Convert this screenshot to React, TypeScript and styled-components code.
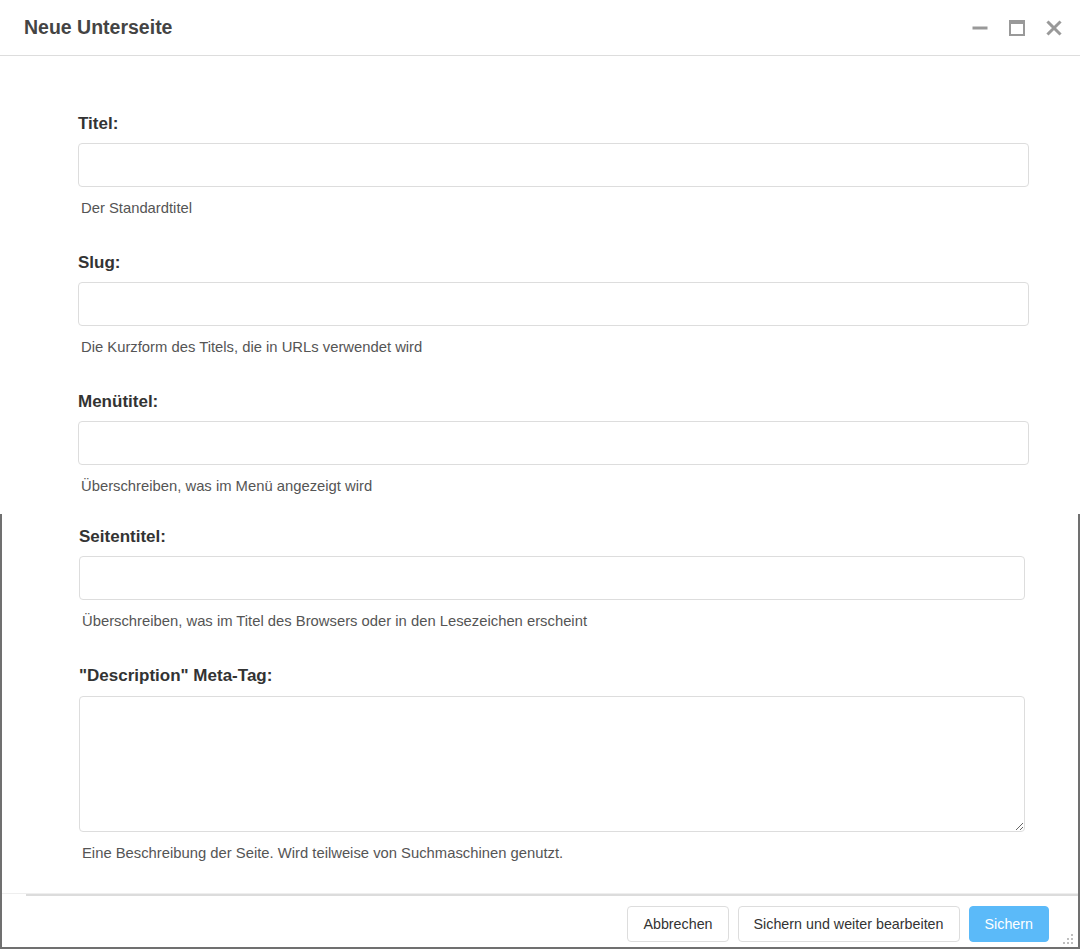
import styled, { createGlobalStyle } from "styled-components";

const GlobalStyle = createGlobalStyle`
  html, body {
    margin: 0;
    padding: 0;
    background: #fff;
  }
  body {
    font-family: "Liberation Sans", Arial, Helvetica, sans-serif;
    color: #333;
  }
`;

type FieldProps = {
  label: string;
  help: string;
  multiline?: boolean;
};

const Field = ({ label, help, multiline }: FieldProps) => (
  <StyledField>
    <StyledLabel>{label}</StyledLabel>
    {multiline ? <StyledTextArea /> : <StyledInput type="text" />}
    <StyledHelp>{help}</StyledHelp>
  </StyledField>
);

const MinimizeIcon = () => (
  <svg width="16" height="16" viewBox="0 0 16 16">
    <rect x="0.5" y="6.5" width="15" height="3" fill="#999" />
  </svg>
);

const MaximizeIcon = () => (
  <svg width="16" height="16" viewBox="0 0 16 16">
    <rect x="1" y="1" width="14" height="14" fill="none" stroke="#999" strokeWidth="2" />
    <rect x="1" y="1" width="14" height="3" fill="#999" />
  </svg>
);

const CloseIcon = () => (
  <svg width="16" height="16" viewBox="0 0 16 16">
    <path d="M2.5 2.5 L13.5 13.5 M13.5 2.5 L2.5 13.5" stroke="#999" strokeWidth="3" strokeLinecap="square" />
  </svg>
);

const App = () => {
  return (
    <>
      <GlobalStyle />
      <StyledDialog>
        <StyledHeader>
          <StyledTitle>Neue Unterseite</StyledTitle>
          <StyledControls>
            <StyledControl aria-label="Minimieren"><MinimizeIcon /></StyledControl>
            <StyledControl aria-label="Maximieren"><MaximizeIcon /></StyledControl>
            <StyledControl aria-label="Schließen"><CloseIcon /></StyledControl>
          </StyledControls>
        </StyledHeader>

        <StyledTopSection>
          <Field label="Titel:" help="Der Standardtitel" />
          <Field label="Slug:" help="Die Kurzform des Titels, die in URLs verwendet wird" />
          <Field label="Menütitel:" help="Überschreiben, was im Menü angezeigt wird" />
        </StyledTopSection>

        <StyledFrame>
          <StyledBottomSection>
            <Field
              label="Seitentitel:"
              help="Überschreiben, was im Titel des Browsers oder in den Lesezeichen erscheint"
            />
            <Field
              label={'"Description" Meta-Tag:'}
              help="Eine Beschreibung der Seite. Wird teilweise von Suchmaschinen genutzt."
              multiline
            />
          </StyledBottomSection>
          <StyledFooter>
            <StyledButton>Abbrechen</StyledButton>
            <StyledButton>Sichern und weiter bearbeiten</StyledButton>
            <StyledButton $primary>Sichern</StyledButton>
            <StyledGrip>
              <svg width="12" height="12" viewBox="0 0 12 12">
                <circle cx="10" cy="2" r="1" fill="#aaa" />
                <circle cx="6" cy="6" r="1" fill="#aaa" />
                <circle cx="10" cy="6" r="1" fill="#aaa" />
                <circle cx="2" cy="10" r="1" fill="#aaa" />
                <circle cx="6" cy="10" r="1" fill="#aaa" />
                <circle cx="10" cy="10" r="1" fill="#aaa" />
              </svg>
            </StyledGrip>
          </StyledFooter>
        </StyledFrame>
      </StyledDialog>
    </>
  );
};

const StyledDialog = styled.div`
  width: 1080px;
  height: 949px;
  display: flex;
  flex-direction: column;
  background: #fff;
`;

const StyledHeader = styled.div`
  height: 55px;
  border-bottom: 1px solid #ddd;
  display: flex;
  align-items: center;
  justify-content: space-between;
  padding: 0 18px 0 24px;
`;

const StyledTitle = styled.h1`
  margin: 0;
  font-size: 19.5px;
  font-weight: bold;
  color: #444;
  line-height: 1;
`;

const StyledControls = styled.div`
  display: flex;
  gap: 21px;
  align-items: center;
`;

const StyledControl = styled.button`
  border: none;
  background: transparent;
  padding: 0;
  width: 16px;
  height: 16px;
  display: flex;
  cursor: pointer;
`;

const StyledTopSection = styled.div`
  padding: 58px 51px 0 78px;
  height: 458px;
  box-sizing: border-box;
`;

const StyledFrame = styled.div`
  flex: 1;
  border: 2px solid #707070;
  border-top: none;
  display: flex;
  flex-direction: column;
  min-height: 0;
`;

const StyledBottomSection = styled.div`
  padding: 13px 53px 0 77px;
  flex: 1;
  min-height: 0;
`;

const StyledField = styled.div`
  display: flex;
  flex-direction: column;
  margin-bottom: 35px;
  &:last-child {
    margin-bottom: 0;
  }
`;

const StyledLabel = styled.label`
  font-size: 17px;
  font-weight: bold;
  line-height: 20px;
  color: #333;
  margin-bottom: 9px;
`;

const StyledInput = styled.input`
  box-sizing: border-box;
  height: 44px;
  width: 100%;
  border: 1px solid #ddd;
  border-radius: 4px;
  padding: 6px 12px;
  font-size: 15px;
  font-family: inherit;
  outline: none;
`;

const StyledTextArea = styled.textarea`
  box-sizing: border-box;
  height: 136px;
  width: 100%;
  border: 1px solid #ddd;
  border-radius: 4px;
  padding: 6px 12px;
  font-size: 15px;
  font-family: inherit;
  resize: vertical;
  outline: none;
  margin-top: 1px;
`;

const StyledHelp = styled.span`
  font-size: 14.8px;
  line-height: 20px;
  color: #555;
  margin-top: 11px;
  padding-left: 3px;
`;

const StyledFooter = styled.div`
  position: relative;
  height: 54px;
  box-sizing: border-box;
  flex-shrink: 0;
  border-top: 1px solid #eee;
  display: flex;
  justify-content: flex-end;
  align-items: flex-start;
  gap: 9px;
  padding: 12px 29px 0 24px;
  background-image: linear-gradient(#dcdcdc, #dcdcdc);
  background-size: calc(100% - 24px) 2px;
  background-position: 24px 0;
  background-repeat: no-repeat;
`;

const StyledButton = styled.button<{ $primary?: boolean }>`
  height: 36px;
  padding: 0 15px;
  border-radius: 4px;
  font-size: 14.3px;
  font-family: inherit;
  cursor: pointer;
  border: 1px solid ${(p) => (p.$primary ? "#5bbaf9" : "#ddd")};
  background: ${(p) => (p.$primary ? "#5bbaf9" : "#fff")};
  color: ${(p) => (p.$primary ? "#fff" : "#333")};
`;

const StyledGrip = styled.div`
  position: absolute;
  right: 4px;
  bottom: 2px;
  display: flex;
`;

export default App;
